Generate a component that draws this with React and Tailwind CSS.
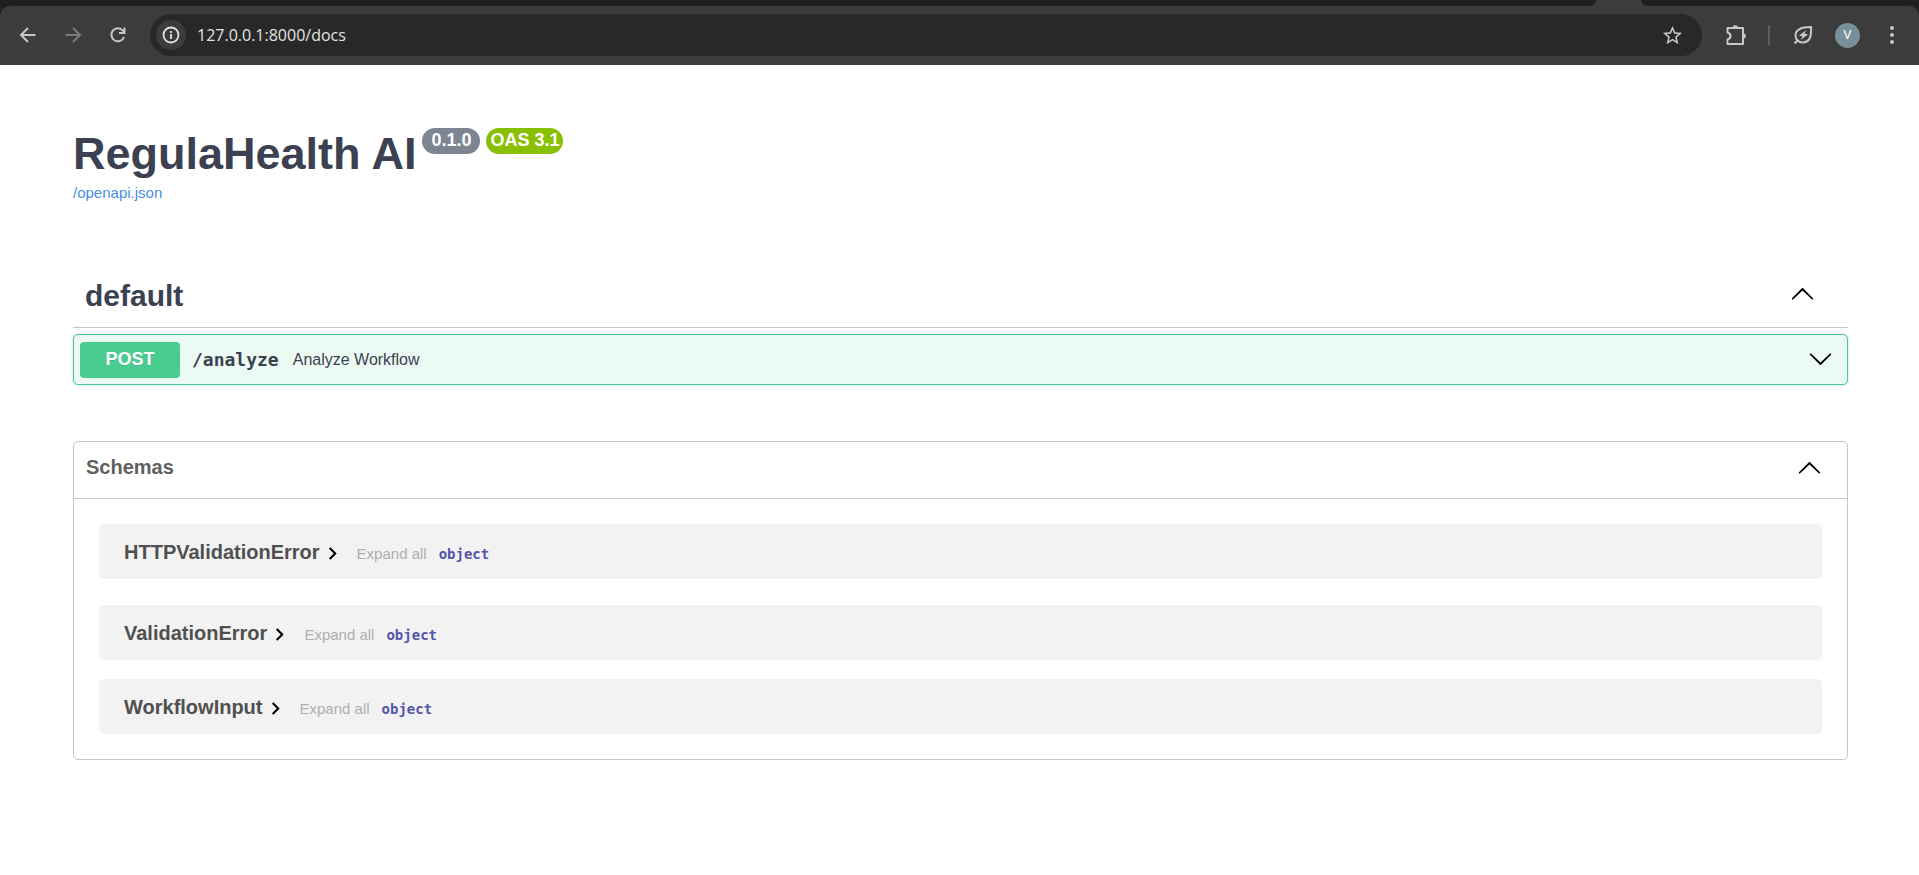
import React, { useState } from "react";

const schemas = ["HTTPValidationError", "ValidationError", "WorkflowInput"];

function BackIcon() {
  return (
    <svg width="20" height="20" viewBox="0 0 20 20" fill="none" stroke="currentColor" strokeWidth="2">
      <path d="M17.5 10H4M10 3L3 10l7 7" />
    </svg>
  );
}

function ForwardIcon() {
  return (
    <svg width="20" height="20" viewBox="0 0 20 20" fill="none" stroke="currentColor" strokeWidth="2">
      <path d="M2.5 10H16M10 3l7 7-7 7" />
    </svg>
  );
}

function ReloadIcon() {
  return (
    <svg width="20" height="20" viewBox="0 0 20 20" fill="none" stroke="currentColor" strokeWidth="2">
      <path d="M16 12A6.500 6.500 0 1 1 14.800 5.600L16.500 7.500" />
      <path d="M16.500 2.500V8H11" />
    </svg>
  );
}

function InfoIcon() {
  return (
    <svg width="18" height="18" viewBox="0 0 18 18" fill="none" stroke="currentColor" strokeWidth="1.8">
      <circle cx="9" cy="9" r="7.5" />
      <path d="M9 8v5M9 5v2" />
    </svg>
  );
}

function StarIcon() {
  return (
    <svg width="23" height="23" viewBox="0 0 24 24" fill="currentColor">
      <path d="M22 9.24l-7.19-.62L12 2 9.19 8.63 2 9.24l5.46 4.73L5.82 21 12 17.27 18.18 21l-1.63-7.030L22 9.24zM12 15.4l-3.76 2.27 1-4.28-3.32-2.88 4.38-.38L12 6.1l1.71 4.04 4.38.38-3.32 2.88 1 4.28L12 15.4z" />
    </svg>
  );
}

function ExtensionIcon() {
  return (
    <svg width="22" height="22" viewBox="0 0 22 22" fill="none" stroke="currentColor" strokeWidth="2">
      <path d="M2.500 4H18v16H2.500v-4.500c4-1 4-6 0-7z" strokeLinejoin="round" />
      <path d="M7.500 4a2.800 2.800 0 0 1 5.600 0zM18 9.200a2.800 2.800 0 0 1 0 5.600z" fill="currentColor" stroke="none" />
    </svg>
  );
}

function LeafIcon() {
  return (
    <svg width="20" height="20" viewBox="0 0 20 20" fill="none" stroke="currentColor" strokeWidth="2">
      <path d="M18 2c.5 8-.5 15.500-8.500 15.500A7 7 0 0 1 2.500 10.500C2.500 3.500 10 2 18 2zM4.800 15.200L1.500 18.500" />
      <path d="M13.500 5L6 10.500l3.500 1L7.500 15l7.500-5.500-3.500-1z" fill="currentColor" stroke="none" />
    </svg>
  );
}

function Chevron({ open }) {
  return (
    <svg
      width="25"
      height="25"
      viewBox="0 0 20 20"
      className={open ? "mb-[3px] rotate-180" : "mb-[3px]"}
    >
      <path d="M17.418 6.109c.272-.268.709-.268.979 0s.271.701 0 .969l-7.908 7.83c-.27.268-.707.268-.979 0l-7.908-7.83c-.27-.268-.27-.701 0-.969.271-.268.709-.268.979 0L10 13.25z" />
    </svg>
  );
}

function BrowserBar() {
  return (
    <header className="bg-[#1f2120]">
      <div className="flex h-[6px] bg-[#3c3c3c]">
        <div className="flex-1 rounded-br-[10px] bg-[#1f2120]"></div>
        <div className="w-[45px]"></div>
        <div className="w-[278px] rounded-bl-[10px] bg-[#1f2120]"></div>
      </div>
      <div className="flex h-[59px] items-center rounded-t-[10px] bg-[#3c3c3c] pr-[17px] pb-px pl-[18px] text-[#c7c7c7]">
        <button type="button" aria-label="Back">
          <BackIcon />
        </button>
        <button type="button" aria-label="Forward" className="ml-[25px] text-[#7b7b7b]">
          <ForwardIcon />
        </button>
        <button type="button" aria-label="Reload" className="ml-[25px]">
          <ReloadIcon />
        </button>
        <div className="ml-[22px] flex h-[42px] flex-1 items-center rounded-full bg-[#282828] pr-[18px] pl-[6px]">
          <button
            type="button"
            aria-label="Site information"
            className="flex size-[30px] items-center justify-center rounded-full bg-[#3c3c3c] text-[#e3e3e3]"
          >
            <InfoIcon />
          </button>
          <input
            type="text"
            aria-label="Address"
            defaultValue="127.0.0.1:8000/docs"
            className="ml-[11px] h-8 flex-1 bg-transparent font-['Open_Sans','Noto_Sans',sans-serif] text-[16px] text-[#e3e3e3] outline-none"
          />
          <button type="button" aria-label="Bookmark">
            <StarIcon />
          </button>
        </div>
        <button type="button" aria-label="Extensions" className="ml-[23px]">
          <ExtensionIcon />
        </button>
        <div className="ml-[21px] h-5 w-[2px] bg-[#5e5e5e]"></div>
        <button type="button" aria-label="Energy saver" className="ml-[23px]">
          <LeafIcon />
        </button>
        <button
          type="button"
          aria-label="Profile"
          className="ml-[22px] flex size-[25px] items-center justify-center rounded-full bg-[#78909c] font-[Roboto,sans-serif] text-[13px] text-white"
        >
          V
        </button>
        <button type="button" aria-label="Menu" className="ml-[22px]">
          <svg width="20" height="20" viewBox="0 0 20 20" fill="currentColor">
            <circle cx="10" cy="3" r="2" />
            <circle cx="10" cy="10" r="2" />
            <circle cx="10" cy="17" r="2" />
          </svg>
        </button>
      </div>
    </header>
  );
}

function SchemaRow({ name }) {
  return (
    <div className="flex h-[55px] items-center rounded-[5px] bg-[#f2f2f2] px-[25px]">
      <div className="flex items-baseline">
        <button type="button" className="flex items-center text-[20px] leading-6 font-bold text-[#505050]">
          {name}
          <svg width="25" height="25" viewBox="0 0 24 24" className="mt-[3px]" fill="#000">
            <path d="M10 6L8.59 7.41 13.17 12l-4.58 4.59L10 18l6-6z" />
          </svg>
        </button>
        <button type="button" className="ml-3 text-[15px] leading-6 text-[#afaeae]">
          Expand all
        </button>
        <strong className="ml-3 font-['DejaVu_Sans_Mono',monospace] text-[14px] leading-6 text-[#5555aa]">
          object
        </strong>
      </div>
    </div>
  );
}

export default function App() {
  const [openTag, setOpenTag] = useState(true);
  const [openSchemas, setOpenSchemas] = useState(true);

  return (
    <div className="bg-white font-['Liberation_Sans',Arial,sans-serif] text-[#3b4151]">
      <BrowserBar />

      <main className="pt-[62px] pr-[71px] pb-[62px] pl-[73px]">
        <div className="flex items-start">
          <h1 className="text-[45px] leading-[54px] font-bold">RegulaHealth AI</h1>
          <span className="mt-px ml-[6px] rounded-full bg-[#7d8492] px-[9px] pb-[2px] text-[18px] leading-6 font-bold text-white">
            0.1.0
          </span>
          <span className="mt-px ml-[6px] rounded-full bg-[#89bf04] px-1 pb-[2px] text-[18px] leading-6 font-bold text-white">
            OAS 3.1
          </span>
        </div>
        <a href="#openapi" className="block w-fit text-[15px] leading-6 text-[#4990e2]">
          /openapi.json
        </a>

        <section className="mt-[60px]">
          <div className="flex h-[63px] items-center justify-between border-b border-[#3b4151]/30 pr-[33px] pl-3">
            <h2 className="text-[30px] leading-9 font-bold">default</h2>
            <button type="button" aria-label="Toggle default" onClick={() => setOpenTag(!openTag)}>
              <Chevron open={openTag} />
            </button>
          </div>
          {openTag && (
            <div className="mt-[6px] flex h-[51px] items-center rounded-[5px] border border-[#49cc90] bg-[#ebfaf3] pr-[14px] pl-[6px] shadow-[0_0_3px_rgba(0,0,0,0.19)]">
              <button
                type="button"
                className="h-9 w-[100px] rounded-[4px] bg-[#49cc90] pb-[2px] text-[18px] leading-6 font-bold text-white [text-shadow:0_1px_0_rgba(0,0,0,0.1)]"
              >
                POST
              </button>
              <a
                href="#analyze"
                className="ml-3 font-['DejaVu_Sans_Mono',monospace] text-[18px] leading-6 font-bold"
              >
                /analyze
              </a>
              <span className="ml-[14px] flex-1 text-[16px] leading-6">Analyze Workflow</span>
              <button type="button" aria-label="Expand operation">
                <Chevron />
              </button>
            </div>
          )}
        </section>

        <section className="mt-14 rounded-[5px] border border-[#3b4151]/30">
          <div className="flex h-[57px] items-center justify-between border-b border-[#3b4151]/30 pr-[25px] pl-3">
            <h3 className="pb-[6px] text-[20px] leading-6 font-bold text-[#606060]">Schemas</h3>
            <button type="button" aria-label="Toggle schemas" onClick={() => setOpenSchemas(!openSchemas)}>
              <Chevron open={openSchemas} />
            </button>
          </div>
          {openSchemas && (
            <div className="flex flex-col gap-[19px] p-[25px]">
              {schemas.map((name, i) => (
                <div key={name} className={i === 0 ? "mb-[7px]" : ""}>
                  <SchemaRow name={name} />
                </div>
              ))}
            </div>
          )}
        </section>
      </main>
    </div>
  );
}
